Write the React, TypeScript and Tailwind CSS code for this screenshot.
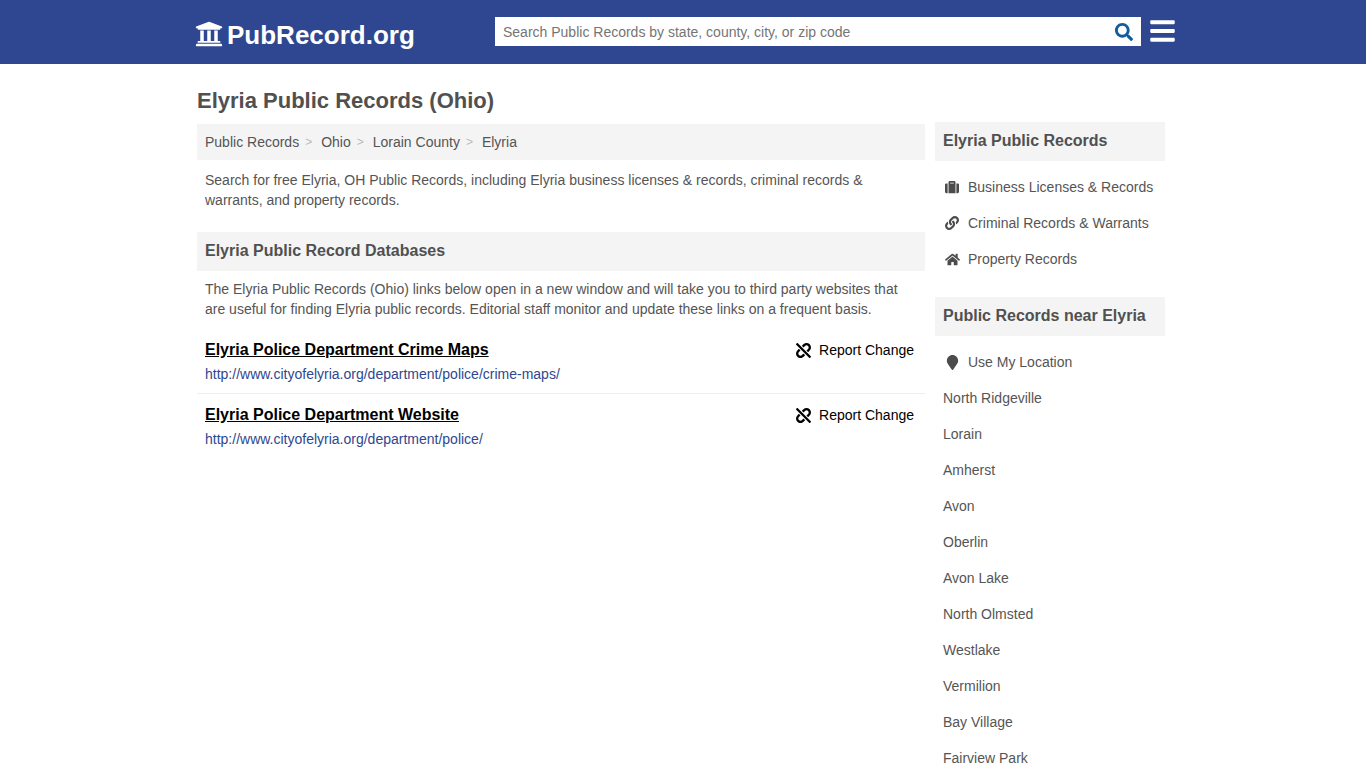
import { FaBars, FaHome, FaLink, FaMapMarker, FaSearch, FaSuitcase, FaUniversity, FaUnlink } from "react-icons/fa";

const crumbs = ["Public Records", "Ohio", "Lorain County", "Elyria"];

const links = [
  { title: "Elyria Police Department Crime Maps", url: "http://www.cityofelyria.org/department/police/crime-maps/" },
  { title: "Elyria Police Department Website", url: "http://www.cityofelyria.org/department/police/" },
];

const nearby = [
  "North Ridgeville",
  "Lorain",
  "Amherst",
  "Avon",
  "Oberlin",
  "Avon Lake",
  "North Olmsted",
  "Westlake",
  "Vermilion",
  "Bay Village",
  "Fairview Park",
];

function SideHeading({ children }: { children: string }) {
  return (
    <h3 className="h-[39px] bg-[#f4f4f4] px-2 text-[16px] font-bold leading-[37px] text-[#505050]">{children}</h3>
  );
}

function SideRow({ icon, children }: { icon?: React.ReactNode; children: string }) {
  return (
    <div className="flex h-9 items-center px-2 text-[14px] text-[#555]">
      {icon && <span className="flex w-[25px] shrink-0 items-center pl-[2px]">{icon}</span>}
      <span>{children}</span>
    </div>
  );
}

export default function App() {
  return (
    <div className="h-screen overflow-hidden bg-white font-['Liberation_Sans',Arial,sans-serif] text-[14px] text-[#555]">
      <header className="h-16 bg-[#2e4790]">
        <div className="mx-auto flex w-[986px] items-start pl-[5px]">
          <div className="flex h-16 w-[300px] shrink-0 items-start pt-[19px] text-white">
            <FaUniversity className="mt-[1px] h-[28px] w-[28px]" />
            <span className="ml-[4px] text-[26px] font-bold leading-[32px]">PubRecord.org</span>
          </div>
          <div className="mt-[17px] flex h-[29px] w-[646px] items-center justify-between bg-white pl-2 pr-2">
            <span className="pt-[2px] text-[14px] text-[#757575]">Search Public Records by state, county, city, or zip code</span>
            <FaSearch className="h-[18px] w-[18px] text-[#0f5c9e]" />
          </div>
          <FaBars className="ml-[9px] mt-[17px] h-[28px] w-[25px] text-white" />
        </div>
      </header>

      <div className="mx-auto w-[972px]">
        <h1 className="mt-[23px] text-[22px] font-bold leading-[28px] text-[#505050]">Elyria Public Records (Ohio)</h1>
        <div className="flex items-start gap-[10px]">
          <main className="w-[728px] shrink-0 pt-[9px]">
            <nav className="flex h-9 items-center bg-[#f4f4f4] px-2">
              {crumbs.map((c, i) => (
                <span key={c} className="flex items-center">
                  {i > 0 && <span className="ml-[6px] mr-[8px] w-[8px] text-[12px] text-[#bbb]">&gt;</span>}
                  <span>{c}</span>
                </span>
              ))}
            </nav>
            <p className="mt-[10px] px-2 leading-[20px]">
              Search for free Elyria, OH Public Records, including Elyria business licenses &amp; records, criminal records &amp; warrants, and property records.
            </p>
            <h2 className="mt-[22px] h-[39px] bg-[#f4f4f4] px-2 text-[16px] font-bold leading-[37px] text-[#505050]">
              Elyria Public Record Databases
            </h2>
            <p className="mt-2 px-2 leading-[20px]">
              The Elyria Public Records (Ohio) links below open in a new window and will take you to third party websites that are useful for finding Elyria public records. Editorial staff monitor and update these links on a frequent basis.
            </p>
            <div className="mt-[10px]">
              {links.map((l, i) => (
                <div key={l.title} className={i === 0 ? "h-[65px] border-b border-[#eee] px-2 pt-[10px]" : "h-[65px] px-2 pt-[10px]"}>
                  <div className="flex items-center justify-between">
                    <a className="text-[16px] font-bold leading-[22px] text-black underline">{l.title}</a>
                    <span className="flex items-center pr-[3px] text-black">
                      <FaUnlink className="mr-[8px] h-[15px] w-[15px]" />
                      Report Change
                    </span>
                  </div>
                  <a className="mt-[3px] block leading-[20px] text-[#2e4790]">{l.url}</a>
                </div>
              ))}
            </div>
          </main>

          <aside className="w-[230px] shrink-0 pt-[7px]">
            <SideHeading>Elyria Public Records</SideHeading>
            <div className="mt-2">
              <SideRow icon={<FaSuitcase className="h-[14px] w-[14px] text-[#4c4c4c]" />}>Business Licenses &amp; Records</SideRow>
              <SideRow icon={<FaLink className="h-[14px] w-[14px] text-[#4c4c4c]" />}>Criminal Records &amp; Warrants</SideRow>
              <SideRow icon={<FaHome className="h-[15px] w-[15px] text-[#4c4c4c]" />}>Property Records</SideRow>
            </div>
            <div className="mt-[20px]">
              <SideHeading>Public Records near Elyria</SideHeading>
            </div>
            <div className="mt-2">
              <SideRow icon={<FaMapMarker className="h-[15px] w-[15px] text-[#4c4c4c]" />}>Use My Location</SideRow>
              {nearby.map((n) => (
                <SideRow key={n}>{n}</SideRow>
              ))}
            </div>
          </aside>
        </div>
      </div>
    </div>
  );
}
